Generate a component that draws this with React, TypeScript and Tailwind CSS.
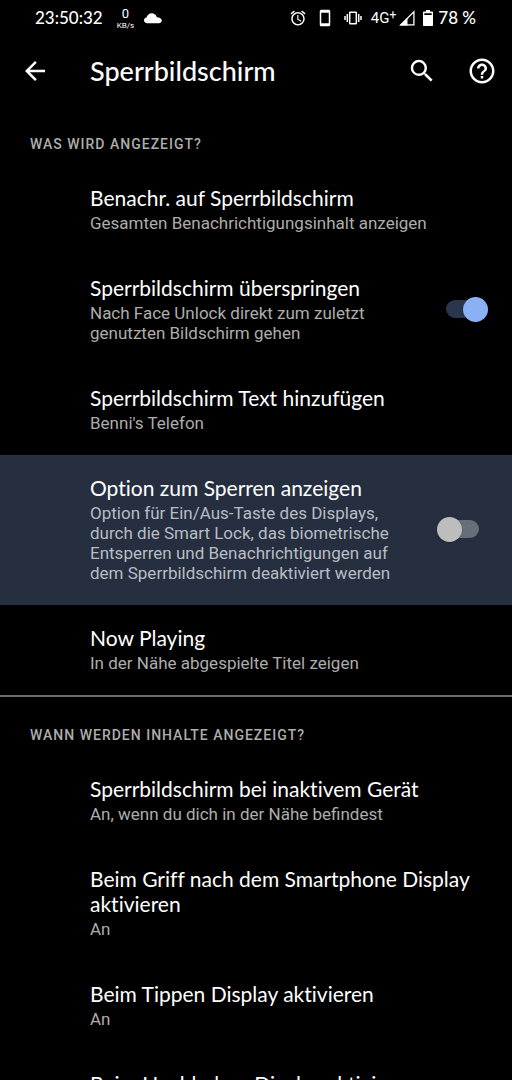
import React, { useId, useState } from 'react';
import { MdAccessAlarm, MdArrowBack, MdHelpOutline, MdSearch, MdStayCurrentPortrait } from 'react-icons/md';

const TITLE_FONT = "font-['Lato','Liberation_Sans',sans-serif] [font-variant-ligatures:none]";
const BODY_FONT = "font-['Roboto','Liberation_Sans',sans-serif]";

type Item = {
    id: string;
    title: string;
    summary: string;
    toggle?: boolean;
    highlighted?: boolean;
};

type Section = {
    heading: string;
    items: Item[];
};

const SECTIONS: Section[] = [
    {
        heading: 'Was wird angezeigt?',
        items: [
            { id: 'notifications', title: 'Benachr. auf Sperrbildschirm', summary: 'Gesamten Benachrichtigungsinhalt anzeigen' },
            { id: 'skip', title: 'Sperrbildschirm überspringen', summary: 'Nach Face Unlock direkt zum zuletzt genutzten Bildschirm gehen', toggle: true },
            { id: 'text', title: 'Sperrbildschirm Text hinzufügen', summary: "Benni's Telefon" },
            {
                id: 'lockdown',
                title: 'Option zum Sperren anzeigen',
                summary: 'Option für Ein/Aus-Taste des Displays, durch die Smart Lock, das biometrische Entsperren und Benachrichtigungen auf dem Sperrbildschirm deaktiviert werden',
                toggle: false,
                highlighted: true,
            },
            { id: 'nowplaying', title: 'Now Playing', summary: 'In der Nähe abgespielte Titel zeigen' },
        ],
    },
    {
        heading: 'Wann werden Inhalte angezeigt?',
        items: [
            { id: 'ambient', title: 'Sperrbildschirm bei inaktivem Gerät', summary: 'An, wenn du dich in der Nähe befindest' },
            { id: 'reach', title: 'Beim Griff nach dem Smartphone Display aktivieren', summary: 'An' },
            { id: 'tap', title: 'Beim Tippen Display aktivieren', summary: 'An' },
            { id: 'lift', title: 'Beim Hochheben Display aktivieren', summary: 'An' },
        ],
    },
];

function CloudIcon() {
    return (
        <svg viewBox="0 0 18 11" className="w-[18px] h-[11px]" fill="currentColor" aria-hidden="true">
            <path d="M3.2 10.2C1.4 10.2 0 9 0 7.3c0-1.5 1-2.7 2.5-2.9C3.3 2 5.3.3 7.7.3c2.6 0 4.500 1.700 5.100 3.900 3 .1 5 1.500 5 3.400 0 1.600-1.300 2.600-3 2.600z" />
        </svg>
    );
}

function VibrateIcon() {
    return (
        <svg viewBox="0 0 18 14" className="w-[18px] h-[14px]" fill="none" stroke="currentColor" aria-hidden="true">
            <rect x="5.700" y="1.200" width="6.600" height="11.600" rx=".6" strokeWidth="1.500" />
            <path d="M3.300 3v8M14.700 3v8M1 5v4M17 5v4" strokeWidth="1.500" />
        </svg>
    );
}

function SignalIcon() {
    return (
        <svg viewBox="0 0 16 16" className="w-4 h-4" aria-hidden="true">
            <path d="M1.800 14.900 14.900 1.800v13.100z" fill="none" stroke="currentColor" strokeWidth="1.300" />
            <path d="M.5 15.500 8.500 7.500v8z" fill="currentColor" />
        </svg>
    );
}

function BatteryIcon() {
    return (
        <svg viewBox="0 0 10 16" className="w-[10px] h-4" fill="currentColor" aria-hidden="true">
            <path fillRule="evenodd" d="M3 0h4v1.600h2.200q.8 0 .8.800v12.800q0 .8-.8.800H.8q-.8 0-.8-.8V2.400q0-.8.8-.8H3zM1.300 3.200v1.800h7.400V3.200z" />
        </svg>
    );
}

function StatusBar() {
    return (
        <div className={`flex items-center justify-between h-9 pl-[35px] pr-9 ${TITLE_FONT}`}>
            <div className="flex items-center">
                <span className="text-[17px] font-medium">23:50:32</span>
                <span className={`ml-[14px] flex flex-col items-center ${BODY_FONT}`}>
                    <span className="text-[13px] leading-[15px]">0</span>
                    <span className="text-[8px] leading-[9px]">KB/s</span>
                </span>
                <span className="ml-[10px]"><CloudIcon /></span>
            </div>
            <div className="flex items-center">
                <MdAccessAlarm className="w-[18px] h-[18px]" />
                <MdStayCurrentPortrait className="ml-[9px] w-[18px] h-[18px]" />
                <span className="ml-[10px]"><VibrateIcon /></span>
                <span className={`ml-[9px] flex text-[15px] ${BODY_FONT}`}>
                    4G<sup className="text-xs leading-4 top-0">+</sup>
                </span>
                <span className="ml-[3px]"><SignalIcon /></span>
                <span className="ml-2"><BatteryIcon /></span>
                <span className="ml-[5px] text-[17px] font-medium">78 %</span>
            </div>
        </div>
    );
}

function AppBar() {
    return (
        <header className="flex items-center h-[70px] pl-5 pr-[15px]">
            <button type="button" aria-label="Zurück" className="w-[30px] h-[30px]">
                <MdArrowBack className="w-[30px] h-[30px]" />
            </button>
            <h1 className={`ml-10 flex-1 text-[27px] leading-8 font-medium ${TITLE_FONT}`}>Sperrbildschirm</h1>
            <button type="button" aria-label="Suchen" className="w-[30px] h-[30px]">
                <MdSearch className="w-[30px] h-[30px]" />
            </button>
            <button type="button" aria-label="Hilfe" className="ml-[30px] w-[30px] h-[30px]">
                <MdHelpOutline className="w-[30px] h-[30px]" />
            </button>
        </header>
    );
}

function Switch({ id, defaultChecked }: { id: string; defaultChecked: boolean }) {
    const [checked, setChecked] = useState(defaultChecked);

    return (
        <span className="relative flex items-center w-[51px] h-[25px] px-[9px] shrink-0">
            <input
                id={id}
                type="checkbox"
                role="switch"
                checked={checked}
                onChange={(e) => setChecked(e.target.checked)}
                className="peer absolute inset-0 z-10 m-0 appearance-none cursor-pointer"
            />
            <span className="w-full h-[18px] rounded-full bg-[#666e7a] peer-checked:bg-[#2b364d]" />
            <span className="absolute left-0 top-0 w-[25px] h-[25px] rounded-full bg-[#bdbdbd] shadow-sm peer-checked:left-auto peer-checked:right-0 peer-checked:bg-[#8ab0f5]" />
        </span>
    );
}

function ItemText({ item }: { item: Item }) {
    return (
        <>
            <span className={`block text-[21px] leading-[25px] ${TITLE_FONT}`}>{item.title}</span>
            <span className={`block mt-[3px] text-[17px] leading-5 ${item.highlighted ? 'text-[#b9bdc3]' : 'text-[#adadad]'}`}>
                {item.summary}
            </span>
        </>
    );
}

function Row({ item }: { item: Item }) {
    const id = useId();
    const rowClass = `flex items-center w-full pl-[90px] pr-6 pt-5 pb-[22px] text-left ${item.highlighted ? 'bg-[#252f3f]' : ''}`;

    if (item.toggle === undefined) {
        return (
            <li>
                <button type="button" className={rowClass}>
                    <span className="flex-1">
                        <ItemText item={item} />
                    </span>
                </button>
            </li>
        );
    }

    return (
        <li className={rowClass}>
            <label htmlFor={id} className="flex-1 pr-6">
                <ItemText item={item} />
            </label>
            <Switch id={id} defaultChecked={item.toggle} />
        </li>
    );
}

export default function App() {
    return (
        <div className={`flex flex-col h-screen overflow-hidden bg-black text-white ${BODY_FONT}`}>
            <StatusBar />
            <AppBar />
            <main className="flex-1 min-h-0 overflow-y-auto [scrollbar-width:none]">
                {SECTIONS.map((section, i) => (
                    <section key={section.heading} className={i > 0 ? 'border-t-2 border-[#6b6b6b]' : ''}>
                        <h2 className="pl-[30px] pt-7 pb-[11px] text-sm font-medium tracking-[1px] uppercase text-[#adadad]">
                            {section.heading}
                        </h2>
                        <ul>
                            {section.items.map((item) => (
                                <Row key={item.id} item={item} />
                            ))}
                        </ul>
                    </section>
                ))}
            </main>
        </div>
    );
}
